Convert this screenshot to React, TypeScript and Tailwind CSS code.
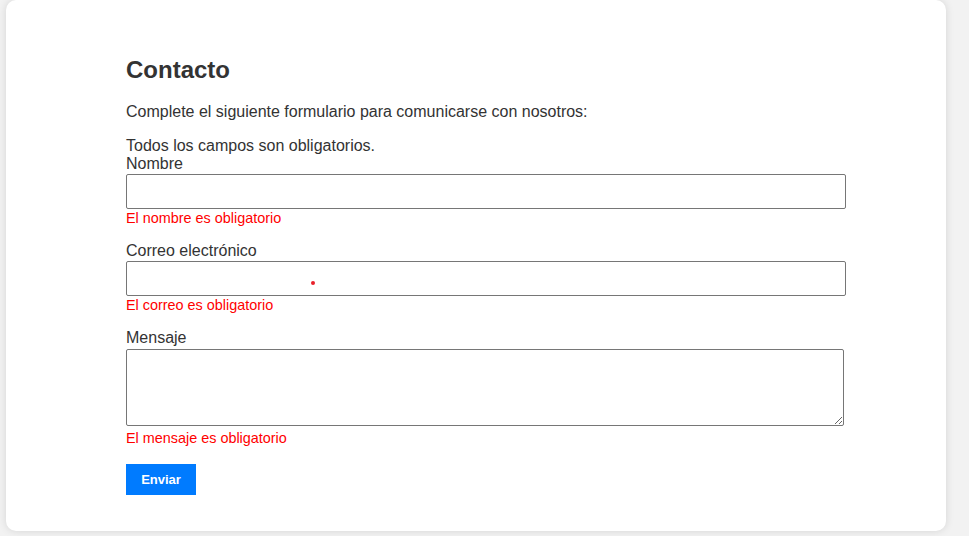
import { useState } from 'react'

export default function App() {
  const [nombre, setNombre] = useState('')
  const [correo, setCorreo] = useState('')
  const [mensaje, setMensaje] = useState('')

  return (
    <div className="min-h-screen bg-[#f2f2f2] font-['Liberation_Sans',Arial,sans-serif] text-[#333]">
      <div className="ml-[6px] w-[940px] h-[531px] bg-white rounded-[10px] shadow-[0_0_8px_rgba(0,0,0,0.12)] pl-[120px] pt-[56px]">
        <h2 className="text-[24px] leading-[28px] font-bold">Contacto</h2>
        <p className="mt-[19px] text-[16px] leading-[18px]">
          Complete el siguiente formulario para comunicarse con nosotros:
        </p>
        <p className="mt-[16px] text-[16px] leading-[18px]">Todos los campos son obligatorios.</p>

        <form onSubmit={(e) => e.preventDefault()}>
          <label className="block text-[16px] leading-[18px]">Nombre</label>
          <input
            value={nombre}
            onChange={(e) => setNombre(e.target.value)}
            className="block mt-[1px] w-[720px] h-[35px] border border-[#767676] rounded-[2px] px-2 outline-none"
          />
          <div className="mt-[1px] text-[14.4px] leading-[16px] text-[#ff0000]">El nombre es obligatorio</div>

          <label className="block mt-[16px] text-[16px] leading-[18px]">Correo electrónico</label>
          <div className="relative mt-[1px] w-[720px]">
            <input
              value={correo}
              onChange={(e) => setCorreo(e.target.value)}
              className="block w-[720px] h-[35px] border border-[#767676] rounded-[2px] px-2 outline-none"
            />
            <span className="absolute left-[185px] top-[20px] w-[4px] h-[4px] rounded-full bg-[#e8202a]" />
          </div>
          <div className="mt-[1px] text-[14.4px] leading-[16px] text-[#ff0000]">El correo es obligatorio</div>

          <label className="block mt-[16px] text-[16px] leading-[18px]">Mensaje</label>
          <textarea
            value={mensaje}
            onChange={(e) => setMensaje(e.target.value)}
            className="block mt-[2px] w-[718px] h-[77px] border border-[#767676] rounded-[2px] p-1 outline-none"
          />
          <div className="mt-[4px] text-[14.4px] leading-[16px] text-[#ff0000]">El mensaje es obligatorio</div>

          <button
            type="submit"
            className="mt-[18px] w-[70px] h-[31px] bg-[#007bff] text-white text-[13px] font-bold"
          >
            Enviar
          </button>
        </form>
      </div>
    </div>
  )
}
